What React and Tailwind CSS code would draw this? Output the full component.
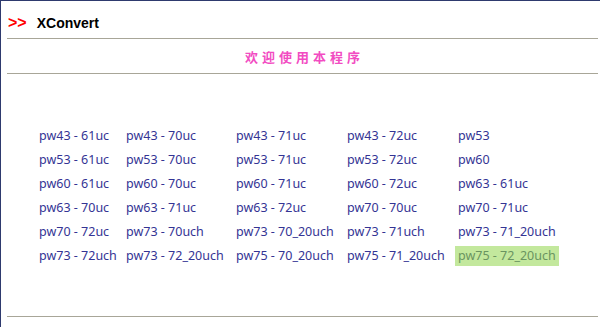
import React from 'react';

const items = [
  'pw43 - 61uc', 'pw43 - 70uc', 'pw43 - 71uc', 'pw43 - 72uc', 'pw53',
  'pw53 - 61uc', 'pw53 - 70uc', 'pw53 - 71uc', 'pw53 - 72uc', 'pw60',
  'pw60 - 61uc', 'pw60 - 70uc', 'pw60 - 71uc', 'pw60 - 72uc', 'pw63 - 61uc',
  'pw63 - 70uc', 'pw63 - 71uc', 'pw63 - 72uc', 'pw70 - 70uc', 'pw70 - 71uc',
  'pw70 - 72uc', 'pw73 - 70uch', 'pw73 - 70_20uch', 'pw73 - 71uch', 'pw73 - 71_20uch',
  'pw73 - 72uch', 'pw73 - 72_20uch', 'pw75 - 70_20uch', 'pw75 - 71_20uch', 'pw75 - 72_20uch',
];

const App = () => {
  return (
    <div className="w-[600px] h-[327px] bg-white border-l border-t border-[#2e3a6e] overflow-hidden">
      <div className="ml-[6px] mr-[2px]">
        {/* Header */}
        <div className="h-[37px] flex items-center pt-[6px] font-['Liberation_Sans',Arial,sans-serif]">
          <span className="text-[16px] font-bold text-[#ff0000] ml-[1px] leading-none">&gt;&gt;</span>
          <span className="text-[14px] font-bold text-black ml-[10px] leading-none">XConvert</span>
        </div>
        <div className="h-px bg-[#a8a698]"></div>

        <div className="h-[34px] flex items-center justify-center pl-[4px] pt-px">
          <span className="text-[13px] font-bold text-[#f24cc2] tracking-[4px] font-['Noto_Sans_CJK_SC',sans-serif]">
            欢迎使用本程序
          </span>
        </div>
        <div className="h-px bg-[#a8a698]"></div>

        {/* List */}
        <div className="mt-[52px] ml-[29px] grid grid-cols-[87px_110px_111px_111px_104px] gap-y-[4px] font-['Noto_Sans',Tahoma,sans-serif] text-[12.5px]">
          {items.map((item, i) => (
            <div
              key={i}
              className={
                i === items.length - 1
                  ? 'h-[20px] flex items-center pl-[3px] bg-[#c3e89d] text-[#6a9460]'
                  : 'h-[20px] flex items-center pl-[3px] text-[#343494]'
              }
            >
              {item}
            </div>
          ))}
        </div>

        <div className="mt-[50px] h-px bg-[#a8a698]"></div>
      </div>
    </div>
  );
};

export default App;
